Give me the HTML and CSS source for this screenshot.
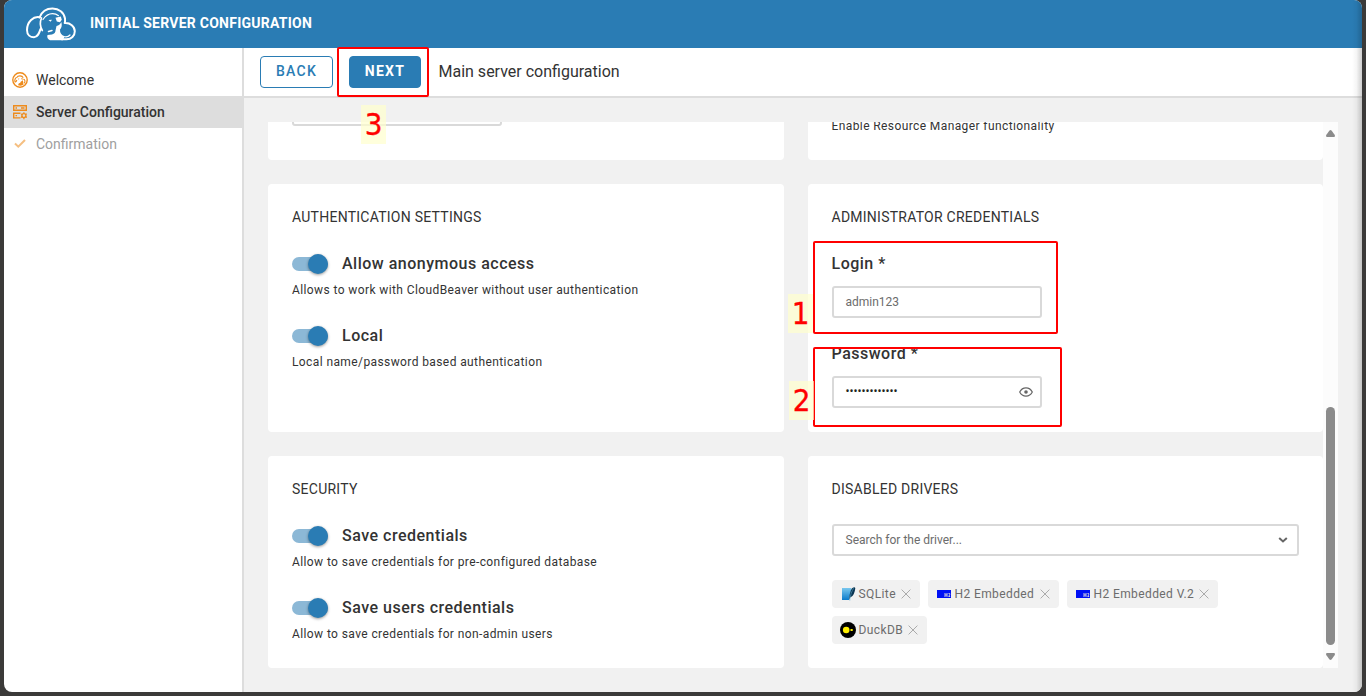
FILE: index.html
```html
<!DOCTYPE html>
<html lang="en">
<head>
<meta charset="utf-8">
<title>Initial Server Configuration</title>
<link rel="stylesheet" href="styles.css">
</head>
<body>
<div class="window">
  <header class="header">
    <svg class="logo" viewBox="0 0 50 34" fill="none" stroke="#fff" stroke-width="2" stroke-linecap="round" stroke-linejoin="round">
      <path d="M13.500 10.500C16 4 21 1.500 26.500 1.500c6.500 0 11.500 4 12.500 10 .2 1.600.1 3.200-.3 4.600 5.500-.5 10.100 3.500 10.100 8.200 0 4.600-3.500 8-8.200 8h-5"/>
      <path d="M14 10.200C7.500 8.500 1 15 1 23c0 5 3.500 7.300 7 7.300 4 0 5.200-4.200 6.500-8.300"/>
      <path d="M15.500 11C13.500 15.500 14 19.500 16.300 23.500" stroke-width="1.700"/>
      <path d="M17 12.500c2-3 5.500-5.800 9.500-5.800 2.500 0 4.500.8 6 2" stroke-width="1.200"/>
      <path d="M29.500 10.800l5.300-1.300 1 3.300-1.800 2.400-3.200-.6zM22.500 13l3.500-.2-1.500 2zM30.500 19c2.200-.4 3.800-1.800 4.800-4 .9 3 .5 5.500-1.300 7.500-.2 3.500 1.500 5.700 4.500 7l-1.500 3.700H24c-2.500-1-3.200-3-2.500-5.200l4.500-.5c2.500-.8 3.500-2 3.500-4z" fill="#fff" stroke="none"/>
      <path d="M22.500 24.500l3.500-1" stroke-width="1.500"/>
      <path d="M37 29.200c3 1.300 5.500.5 7-1.200" stroke-width="1.200"/>
    </svg>
    <h1 class="header-title">Initial Server Configuration</h1>
  </header>
  <div class="body">
    <nav class="sidebar">
      <div class="step">
        <svg class="step-icon" viewBox="0 0 16 16" fill="none" stroke="#ee8b1c" stroke-width="1.400">
          <circle cx="8" cy="8" r="7.200"/>
          <path d="M4.800 5.500C5.800 3.500 10 3 11.200 5.800M4.800 5.500C3.200 5.500 2.500 8 3 9.800c1 .5 1.500-.8 1.800-1.800M11.300 7.300c2 .2 2.200 2.800.7 4" stroke-width="1.100"/>
          <path d="M6 6.500l1.500.2-1 1zM8.800 6.200l2.200.2-.8 1.600zM8.700 9.700l2.200-1.500.6 4.600-2.800 1-2.700-.6 1-2.200 1 .2z" fill="#ee8b1c" stroke="none"/>
        </svg>
        <span>Welcome</span>
      </div>
      <div class="step active">
        <svg class="step-icon" viewBox="0 0 16 16" fill="none" stroke="#ee8b1c" stroke-width="1.400">
          <path d="M1.700 1.700h12.600v4.600H1.700zM8.500 13.900H1.700V9.300H8.500M3.500 4H5M9 4h3.500M3.500 11.600H5"/>
          <circle cx="11.900" cy="11.600" r="2"/>
          <path d="M11.900 8.300v1.300M11.900 13.600v1.600M9 9.900l1.200.7M13.600 12.600l1.200.8M9 13.400l1.200-.8M13.600 10.600l1.200-.8" stroke-width="1.200"/>
        </svg>
        <span>Server Configuration</span>
      </div>
      <div class="step disabled">
        <svg class="step-icon" viewBox="0 0 16 16" fill="none" stroke="#ee8b1c" stroke-width="2"><path d="M3 7.500l3.300 3.200 6.700-6.700"/></svg>
        <span>Confirmation</span>
      </div>
    </nav>
    <main class="main">
      <div class="toolbar">
        <button class="button outlined">BACK</button>
        <button class="button filled">NEXT</button>
        <span class="toolbar-title">Main server configuration</span>
      </div>
      <div class="content">
        <div class="viewport">
          <div class="grid">
            <section class="card card-host"><div class="input"></div></section>
            <section class="card card-services"><p class="description">Enable Resource Manager functionality</p></section>
            <section class="card">
              <h2 class="card-title">Authentication settings</h2>
              <div class="switches">
                <div class="field"><div class="switch-row"><i class="switch"></i><span class="label">Allow anonymous access</span></div><p class="description">Allows to work with CloudBeaver without user authentication</p></div>
                <div class="field"><div class="switch-row"><i class="switch"></i><span class="label">Local</span></div><p class="description">Local name/password based authentication</p></div>
              </div>
            </section>
            <section class="card">
              <h2 class="card-title">Administrator credentials</h2>
              <div class="credentials">
                <div class="credential"><span class="label">Login *</span><div class="input">admin123</div></div>
                <div class="credential"><span class="label">Password *</span>
                  <div class="input password"><span class="dots">•••••••••••••</span>
                    <svg class="eye" viewBox="0 0 14 10" fill="none" stroke="#666" stroke-width="1.200"><path d="M.7 5C3.500-.5 10.500-.5 13.300 5 10.500 10.500 3.500 10.500.7 5z"/><circle cx="7" cy="5" r="1.800" fill="#666" stroke="none"/></svg>
                  </div>
                </div>
              </div>
            </section>
            <section class="card">
              <h2 class="card-title">Security</h2>
              <div class="switches">
                <div class="field"><div class="switch-row"><i class="switch"></i><span class="label">Save credentials</span></div><p class="description">Allow to save credentials for pre-configured database</p></div>
                <div class="field"><div class="switch-row"><i class="switch"></i><span class="label">Save users credentials</span></div><p class="description">Allow to save credentials for non-admin users</p></div>
              </div>
            </section>
            <section class="card">
              <h2 class="card-title">Disabled drivers</h2>
              <div class="input select"><span>Search for the driver...</span>
                <svg class="chevron" viewBox="0 0 10 6" fill="none" stroke="#666" stroke-width="2"><path d="M1.200 1L5 4.500 8.800 1"/></svg>
              </div>
              <div class="tags">
                <div class="tag tag-sqlite">
                  <svg class="driver" viewBox="0 0 16 16"><defs><linearGradient id="sq" x1="0" y1="0" x2="0" y2="1"><stop offset="0" stop-color="#79c7ee"/><stop offset="1" stop-color="#0b7bcb"/></linearGradient></defs><path d="M2 2h9.500L9 14H2z" fill="url(#sq)"/><path d="M14.500 1.300c-3 0-5 4.500-5.200 12.900l.9-2.700c3.500-1.500 4.700-5.500 5.100-9.500z" fill="#0a3552"/><path d="M13.700 2.200C11.500 5.500 10.300 9 9.800 14.800" stroke="#6bbadc" stroke-width=".5" fill="none"/></svg>
                  <span>SQLite</span><svg class="close" viewBox="0 0 10 10"><path d="M.6.6l8.800 8.800M9.400.6L.6 9.400"/></svg></div>
                <div class="tag tag-h2">
                  <svg class="driver" viewBox="0 0 16 16"><path d="M1 4h14v8H1z" fill="#0010f5"/><path d="M9 7v4M11 7v4M9 9H11M12.500 7.500h1.200v1.300l-1 1.700H14.200" fill="none" stroke="#ccd" stroke-width="1"/></svg>
                  <span>H2 Embedded</span><svg class="close" viewBox="0 0 10 10"><path d="M.6.6l8.800 8.800M9.400.6L.6 9.400"/></svg></div>
                <div class="tag tag-h2v2">
                  <svg class="driver" viewBox="0 0 16 16"><path d="M1 4h14v8H1z" fill="#0010f5"/><path d="M9 7v4M11 7v4M9 9H11M12.500 7.500h1.200v1.300l-1 1.700H14.200" fill="none" stroke="#ccd" stroke-width="1"/></svg>
                  <span>H2 Embedded V.2</span><svg class="close" viewBox="0 0 10 10"><path d="M.6.6l8.800 8.800M9.400.6L.6 9.400"/></svg></div>
                <div class="tag tag-duck">
                  <svg class="driver" viewBox="0 0 16 16"><circle cx="8" cy="8" r="8"/><circle cx="6.200" cy="8" r="3.300" fill="#fff000"/><path d="M10.500 6.900h1.400a1.100 1.100 0 010 2.200h-1.400z" fill="#fff000"/></svg>
                  <span>DuckDB</span><svg class="close" viewBox="0 0 10 10"><path d="M.6.6l8.800 8.800M9.400.6L.6 9.400"/></svg></div>
              </div>
            </section>
          </div>
          <div class="scrollbar">
            <svg class="arrow" viewBox="0 0 9 7"><path d="M3.500.5Q4.500-.4 5.500.5L8.800 5Q9.300 7 8 7H1Q-.3 7 .2 5z"/></svg>
            <i class="thumb"></i>
            <svg class="arrow" viewBox="0 0 9 7"><path d="M3.500 6.500Q4.500 7.400 5.500 6.500L8.800 2Q9.300 0 8 0H1Q-.3 0 .2 2z"/></svg>
          </div>
        </div>
      </div>
    </main>
  </div>
</div>
<!-- Walkthrough annotations -->
<div class="mark mark-login"></div>
<div class="mark mark-password"></div>
<div class="mark mark-next"></div>
<div class="number number-one">1</div>
<div class="number number-two">2</div>
<div class="number number-three">3</div>
</body>
</html>
```
FILE: styles.css
```css
* { box-sizing: border-box; }
body { margin: 0; height: 696px; padding: 0 4px 4px; overflow: hidden; background: #3b3a39; color: #333; font-family: Roboto, sans-serif; position: relative; }
h1, h2, p { margin: 0; font-weight: 400; }
svg { display: block; flex: none; }
.window { height: 692px; display: flex; flex-direction: column; border-radius: 8px; overflow: hidden; position: relative; background: #fff; }
.window::after { content: ""; position: absolute; top: 0; right: 0; bottom: 0; width: 10px; background: linear-gradient(to right, transparent, rgba(0,0,0,.04) 45%, rgba(0,0,0,.19)); }
.header { height: 48px; flex: none; display: flex; align-items: center; background: #2a7cb4; color: #fff; padding-left: 22px; }
.logo { width: 50px; height: 34px; }
.header-title { margin-left: 14px; font-size: 14px; line-height: 20px; font-weight: 700; letter-spacing: .25px; text-transform: uppercase; padding-bottom: 2px; }
.body { flex: 1; display: flex; min-height: 0; }
.sidebar { width: 240px; flex: none; border-right: 2px solid #ddd; padding-top: 16px; }
.step { height: 32px; display: flex; align-items: center; gap: 8px; padding-left: 8px; font-size: 14px; }
.step-icon { width: 16px; height: 16px; }
.active { background: #ddd; font-weight: 500; }
.disabled { color: #a0a0a0; }
.disabled .step-icon { opacity: .55; }
.main { flex: 1; display: flex; flex-direction: column; min-width: 0; background: #f1f1f1; }
.toolbar { height: 50px; flex: none; display: flex; align-items: center; border-bottom: 2px solid #ddd; background: #fff; padding-left: 16px; }
.button { height: 32px; border: 1px solid #2a7cb4; border-radius: 4px; padding: 0 0 2px; font: 500 14px/28px Roboto, sans-serif; letter-spacing: 1.25px; }
.outlined { width: 73px; color: #2a7cb4; background: #fff; }
.filled { width: 72px; margin-left: 16px; color: #fff; background: #2a7cb4; font-weight: 700; }
.toolbar-title { margin-left: 17.500px; padding-bottom: 2px; font-size: 16px; }
.content { flex: 1; min-height: 0; padding: 24px; }
.viewport { height: 546px; display: flex; overflow: hidden; }
.grid { flex: 1; display: grid; grid-template-columns: 1fr 1fr; grid-template-rows: 90px 248px 212px; gap: 24px; align-content: end; }
.card { background: #fff; border-radius: 4px; padding: 24px; }
.card-host, .card-services { display: flex; align-items: flex-end; }
.card-host { padding-bottom: 34px; }
.card-services { padding-bottom: 26px; }
.card-title { font-size: 14px; line-height: 18px; letter-spacing: .25px; text-transform: uppercase; }
.switches { display: flex; flex-direction: column; gap: 28px; margin-top: 28px; }
.switch-row { display: flex; align-items: center; gap: 14px; height: 20px; }
.switch { width: 36px; height: 14px; border-radius: 7px; background: #8cb8d6; display: flex; justify-content: flex-end; align-items: center; }
.switch::after { content: ""; width: 20px; height: 20px; flex: none; border-radius: 50%; background: #2a7cb4; box-shadow: 0 1px 3px rgba(0,0,0,.4); }
.label { font-size: 16px; line-height: 20px; font-weight: 500; letter-spacing: .5px; }
.description { font-size: 12px; line-height: 16px; letter-spacing: .4px; }
.field .description { margin-top: 8px; }
.credentials { display: flex; flex-direction: column; gap: 26px; margin-top: 28px; }
.credential { display: flex; flex-direction: column; gap: 12px; }
.input { width: 210px; height: 32px; border: 2px solid #d9d9d9; border-radius: 3px; padding: 0 11px 0 12px; display: flex; align-items: center; justify-content: space-between; font-size: 12px; color: #6c6c6c; background: #fff; }
.password { padding-right: 7px; }
.dots { font-size: 12px; line-height: 14px; letter-spacing: -.04px; padding-bottom: 2px; color: #222; }
.eye { width: 14px; height: 10px; }
.select { width: 100%; margin-top: 26px; padding-right: 9px; }
.chevron { width: 10px; height: 6px; }
.tags { display: flex; flex-wrap: wrap; gap: 8px; margin-top: 24px; }
.tag { height: 28px; display: flex; align-items: center; border-radius: 4px; padding: 0 8.500px 0 8px; background: #f1f1f1; color: #6c6c6c; font-size: 12px; letter-spacing: .4px; }
.tag span { margin-left: 3px; }
.tag-sqlite { width: 88px; }
.tag-h2 { width: 131px; }
.tag-h2v2 { width: 151px; }
.tag-duck { width: 95px; }
.driver { width: 16px; height: 16px; }
.close { width: 10px; height: 10px; margin-left: auto; stroke: #aaa; fill: none; }
.scrollbar { width: 15px; flex: none; background: #fcfcfc; display: flex; flex-direction: column; align-items: center; padding: 8px 0; }
.arrow { width: 9px; height: 7px; fill: #8b8b8b; }
.thumb { width: 9px; height: 238px; margin: auto 0 8px; border-radius: 5px; background: #8b8b8b; }
/* Annotations float above the interface at their marked locations */
.mark { position: absolute; border: 2px solid #f00; border-radius: 2px; }
.mark-next { left: 337px; top: 47px; width: 92px; height: 50px; }
.mark-login { left: 813px; top: 241px; width: 245px; height: 93px; }
.mark-password { left: 813px; top: 347px; width: 249px; height: 80px; }
.number { position: absolute; width: 25px; height: 39px; background: rgba(255,255,205,.7); color: #f00; text-align: center; font: 31px/38px "DejaVu Sans Condensed", "DejaVu Sans", sans-serif; -webkit-text-stroke: .3px #f00; }
.number-one { left: 788px; top: 294px; }
.number-two { left: 789px; top: 381px; }
.number-three { left: 361px; top: 105px; }
```
